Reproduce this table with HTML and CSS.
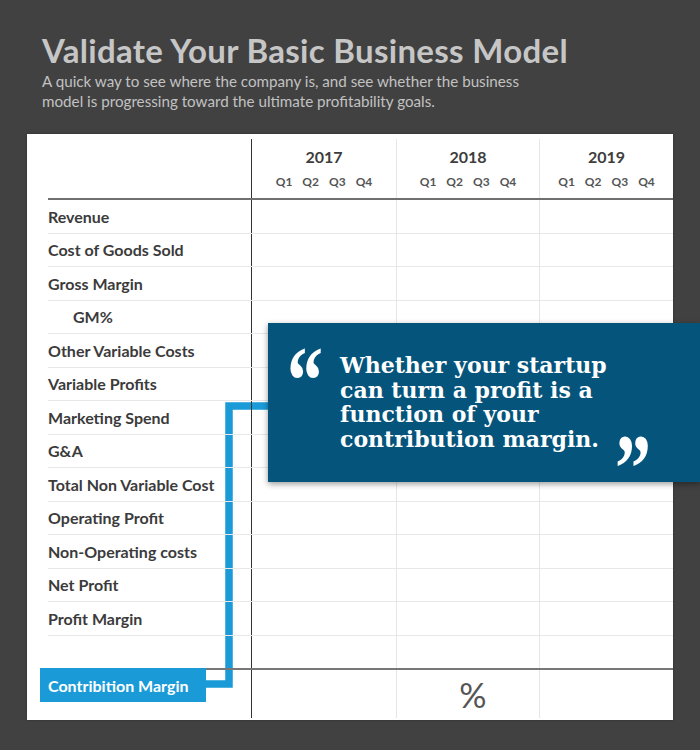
FILE: index.html
```html
<!DOCTYPE html>
<html lang="en">
<head>
<meta charset="utf-8">
<title>Validate Your Basic Business Model</title>
<link rel="stylesheet" href="styles.css">
</head>
<body>
<header class="intro">
  <h1 class="title">Validate Your Basic Business Model</h1>
  <p class="subtitle">A quick way to see where the company is, and see whether the business<br>model is progressing toward the ultimate profitability goals.</p>
</header>
<main class="card">
  <svg class="connector" width="646" height="586" viewBox="0 0 646 586" aria-hidden="true">
    <polyline points="245,272 202,272 202,550 172,550" fill="none" stroke="#1a9bd8" stroke-width="7.5" stroke-linejoin="miter"/>
  </svg>
  <div class="table">
    <div class="row head">
      <div class="label"></div>
      <div class="cell first"><div class="year">2017</div><div class="qs"><span>Q1</span><span>Q2</span><span>Q3</span><span>Q4</span></div></div>
      <div class="cell"><div class="year">2018</div><div class="qs"><span>Q1</span><span>Q2</span><span>Q3</span><span>Q4</span></div></div>
      <div class="cell"><div class="year">2019</div><div class="qs"><span>Q1</span><span>Q2</span><span>Q3</span><span>Q4</span></div></div>
    </div>
    <div class="row"><div class="label">Revenue</div><div class="cell first"></div><div class="cell"></div><div class="cell"></div></div>
    <div class="row"><div class="label">Cost of Goods Sold</div><div class="cell first"></div><div class="cell"></div><div class="cell"></div></div>
    <div class="row"><div class="label">Gross Margin</div><div class="cell first"></div><div class="cell"></div><div class="cell"></div></div>
    <div class="row"><div class="label indent">GM%</div><div class="cell first"></div><div class="cell"></div><div class="cell"></div></div>
    <div class="row"><div class="label">Other Variable Costs</div><div class="cell first"></div><div class="cell"></div><div class="cell"></div></div>
    <div class="row"><div class="label">Variable Profits</div><div class="cell first"></div><div class="cell"></div><div class="cell"></div></div>
    <div class="row"><div class="label">Marketing Spend</div><div class="cell first"></div><div class="cell"></div><div class="cell"></div></div>
    <div class="row"><div class="label">G&amp;A</div><div class="cell first"></div><div class="cell"></div><div class="cell"></div></div>
    <div class="row"><div class="label">Total Non Variable Cost</div><div class="cell first"></div><div class="cell"></div><div class="cell"></div></div>
    <div class="row"><div class="label">Operating Profit</div><div class="cell first"></div><div class="cell"></div><div class="cell"></div></div>
    <div class="row"><div class="label">Non-Operating costs</div><div class="cell first"></div><div class="cell"></div><div class="cell"></div></div>
    <div class="row"><div class="label">Net Profit</div><div class="cell first"></div><div class="cell"></div><div class="cell"></div></div>
    <div class="row"><div class="label">Profit Margin</div><div class="cell first"></div><div class="cell"></div><div class="cell"></div></div>
    <div class="row empty"><div class="label"></div><div class="cell first"></div><div class="cell"></div><div class="cell"></div></div>
    <div class="row total"><div class="label"></div><div class="cell first"></div><div class="cell pct">%</div><div class="cell"></div></div>
  </div>
  <div class="cm-label">Contribition Margin</div>
  <blockquote class="quote">
    <span class="q-open">&#8220;</span>
    <p class="q-text">Whether your startup<br>can turn a profit is a<br>function of your<br>contribution margin.</p>
    <span class="q-close">&#8221;</span>
  </blockquote>
</main>
</body>
</html>
```

FILE: styles.css
```css
html, body {
  margin: 0;
  padding: 0;
  overflow: hidden;
}
body {
  background: #414141;
  width: 700px;
  height: 750px;
  font-family: Lato, "Open Sans", sans-serif;
}
.intro {
  padding: 32px 0 0 42px;
}
.title {
  margin: 0;
  font-size: 33px;
  line-height: 36px;
  font-weight: 700;
  color: #c6c6c6;
  letter-spacing: 0.3px;
}
.subtitle {
  margin: 3px 0 0;
  font-size: 15.2px;
  line-height: 20px;
  color: #c2c2c2;
}
.card {
  position: relative;
  box-sizing: border-box;
  width: 646px;
  height: 586px;
  margin: 23px 0 0 27px;
  padding: 5px 0 2px 0;
  background: #ffffff;
  box-shadow: 0 0 2px rgba(0,0,0,0.3);
}
.connector {
  position: absolute;
  left: 0;
  top: 0;
  z-index: 0;
}
.table {
  position: relative;
  z-index: 1;
  margin-left: 21px;
  width: 625px;
}
.row {
  display: grid;
  grid-template-columns: 203px 145px 143px 1fr;
  box-sizing: border-box;
  height: 33.5px;
  border-bottom: 1px solid #e8e8e8;
}
.row.head {
  height: 61px;
  border-bottom: 2px solid #707070;
}
.row.empty {
  height: 34.5px;
  border-bottom: 2px solid #777777;
}
.row.total {
  height: 48px;
  border-bottom: none;
}
.label {
  display: flex;
  align-items: center;
  font-size: 16px;
  font-weight: 700;
  color: #3b3b3b;
  white-space: nowrap;
}
.label.indent {
  padding-left: 25px;
}
.cell {
  border-left: 1px solid #e6e6e6;
}
.cell.first {
  border-left: 1px solid #333333;
}
.head .cell {
  display: flex;
  flex-direction: column;
  align-items: center;
  padding-top: 8px;
}
.year {
  font-size: 16px;
  line-height: 20px;
  font-weight: 700;
  color: #3d3d3d;
}
.qs {
  display: flex;
  gap: 10px;
  margin-top: 7.5px;
  font-size: 12px;
  line-height: 14px;
  font-weight: 700;
  color: #555555;
}
.pct {
  display: flex;
  align-items: center;
  justify-content: center;
  padding-left: 10px;
  font-size: 34px;
  color: #555555;
}
.cm-label {
  position: absolute;
  z-index: 2;
  left: 13px;
  top: 534px;
  box-sizing: border-box;
  width: 166px;
  height: 34px;
  padding-left: 8px;
  display: flex;
  align-items: center;
  background: #1a9bd8;
  color: #ffffff;
  font-size: 16px;
  font-weight: 700;
}
.quote {
  position: absolute;
  z-index: 2;
  left: 241px;
  top: 189px;
  box-sizing: border-box;
  width: 432px;
  height: 159px;
  margin: 0;
  padding: 30px 0 0 72px;
  background: #04547c;
  box-shadow: 0 2px 6px rgba(0,0,0,0.4);
  color: #ffffff;
}
.q-text {
  margin: 0;
  font-family: "DejaVu Serif", serif;
  font-weight: 700;
  font-size: 22px;
  line-height: 24.5px;
}
.q-open, .q-close {
  position: absolute;
  font-family: "Liberation Serif", serif;
  font-weight: 700;
  font-size: 72px;
  line-height: 72px;
  color: #ffffff;
  transform: scaleY(1.35);
  transform-origin: top left;
}
.q-open {
  left: 19px;
  top: 9px;
}
.q-close {
  left: 347px;
  top: 97px;
}
```
